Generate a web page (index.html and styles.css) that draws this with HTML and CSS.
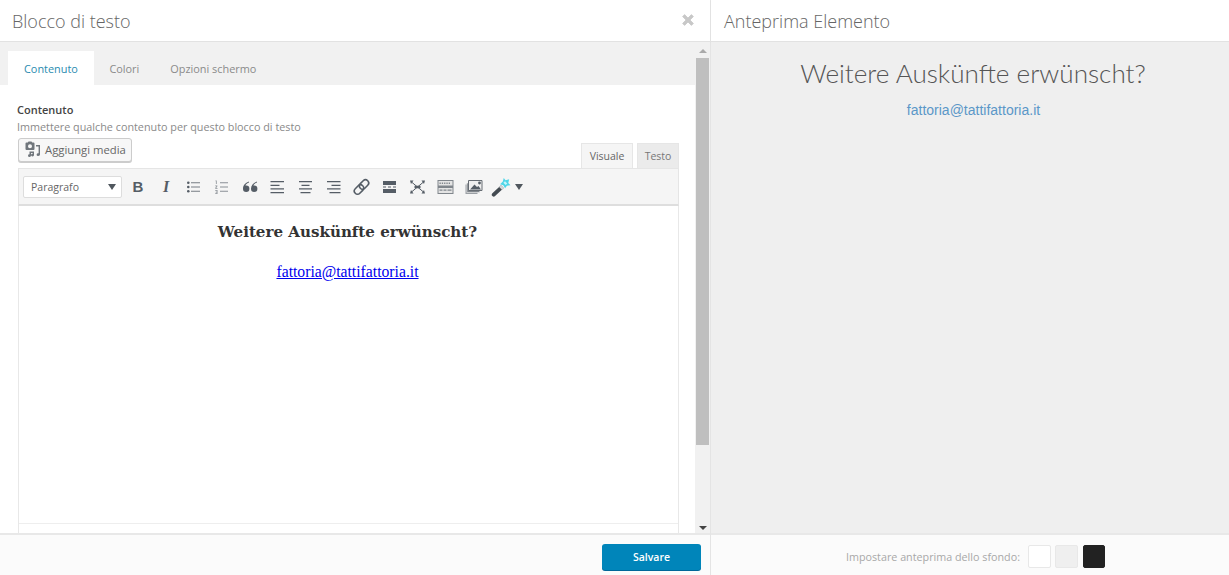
FILE: index.html
```html
<!DOCTYPE html>
<html lang="it">
<head>
<meta charset="utf-8">
<title>Blocco di testo</title>
<link rel="stylesheet" href="styles.css">
</head>
<body>
<div class="app">
  <section class="pane-left">
    <header class="head head-left">
      <h1 class="title">Blocco di testo</h1>
      <svg class="close" viewBox="0 0 12 12" width="12" height="12"><path d="M2.6 0.6 6 4 9.400 0.6 11.400 2.600 8 6 11.400 9.400 9.400 11.400 6 8 2.600 11.400 0.6 9.400 4 6 0.6 2.600Z" stroke="#c8c8c8" stroke-width=".8" stroke-linejoin="round"/></svg>
    </header>
    <div class="body-left">
      <div class="scroller">
        <nav class="tabs">
          <a class="tab active">Contenuto</a>
          <a class="tab">Colori</a>
          <a class="tab">Opzioni schermo</a>
        </nav>
        <div class="form">
          <div class="label">Contenuto</div>
          <div class="desc">Immettere qualche contenuto per questo blocco di testo</div>
          <div class="editor-top">
            <button class="media-btn">
              <svg viewBox="0 0 16 16" width="16" height="16"><path fill="#70767c" d="M1.500 1.500h1.300L3.500.5h3l.7 1h1.300a1 1 0 0 1 1 1V8a1 1 0 0 1-1 1h-7a1 1 0 0 1-1-1V2.500a1 1 0 0 1 1-1ZM5 3.200a2 2 0 1 0 0 4 2 2 0 0 0 0-4Z"/><path fill="#70767c" d="M11 4h4v9.500a1.700 1.400 0 1 1-1.400-1.300V5.500H11ZM4.500 10.500h4.500v3.500a1.500 1.300 0 1 1-1.300-1.200V12H6v2.500a1.500 1.300 0 1 1-1.500-1.200Z"/></svg>
              Aggiungi media
            </button>
            <div class="mode-tabs">
              <span class="mode active">Visuale</span>
              <span class="mode">Testo</span>
            </div>
          </div>
          <div class="toolbar">
            <div class="select">Paragrafo<i class="caret"></i></div>
            <div class="tools">
              <span class="tool glyph-b">B</span>
              <span class="tool glyph-i">I</span>
              <svg class="tool" viewBox="0 0 20 20"><path d="M7 5.200h9v1H7zM7 9.500h9v1H7zM7 13.800h9v1H7z" fill="#777d84"/><circle cx="4.300" cy="5.700" r="1.300"/><circle cx="4.300" cy="10" r="1.300"/><circle cx="4.300" cy="14.300" r="1.300"/></svg>
              <svg class="tool" viewBox="0 0 20 20"><path d="M8 5.200h8v1H8zM8 9.500h8v1H8zM8 13.800h8v1H8z" fill="#8a9096"/><path d="M3.500 3.500h1.200v3.600h-.8V4.300h-.4ZM3.200 8.500h2.200v.8L4.200 11h1.300v.7H3.200V11l1.300-1.700H3.200ZM3.200 13h2.300v4H3.200v-.7h1.500v-.9h-1v-.6h1v-1H3.200Z" fill="#8a9096"/></svg>
              <svg class="tool" viewBox="0 0 20 20"><path d="M9 4.500C6 5.500 3 7.800 3 11.700a3.200 3.200 0 1 0 3.200-3.200c-.3 0-.6 0-.8.100.5-1.400 1.900-2.400 3.600-3ZM17 4.500c-3 1-6 3.300-6 7.200a3.200 3.200 0 1 0 3.200-3.200c-.3 0-.6 0-.8.100.5-1.400 1.900-2.400 3.600-3Z"/></svg>
              <svg class="tool" viewBox="0 0 20 20"><path d="M2.500 4H16v1.200H2.500zM2.500 7.700h9V9h-9zM2.500 11.300H16v1.200H2.500zM2.500 15H16v1.200H2.500z"/></svg>
              <svg class="tool" viewBox="0 0 20 20"><path d="M3 4h13v1.200H3zM5.500 7.700h8V9h-8zM3 11.300h13v1.200H3zM4.500 15h10v1.200h-10z"/></svg>
              <svg class="tool" viewBox="0 0 20 20"><path d="M3 4h13.500v1.200H3zM7.500 7.700h9V9h-9zM3 11.300h13.500v1.200H3zM5.500 15h11v1.200h-11z"/></svg>
              <svg class="tool" viewBox="0 0 20 20"><g fill="none" stroke="#555d66" stroke-width="1.600" transform="rotate(-45 9.500 10)"><rect x="0.700" y="6.800" width="10.500" height="6.400" rx="3.200"/><rect x="7.800" y="6.800" width="10.500" height="6.400" rx="3.200"/></g></svg>
              <svg class="tool" viewBox="0 0 20 20"><path d="M3 4h13v4H3zM3 12h13v4H3zM3 9.400h3v1.200H3zM8 9.400h3v1.200H8zM13 9.400h3v1.200h-3z"/></svg>
              <svg class="tool" viewBox="0 0 20 20"><path d="M3.500 5 15.500 15M15.500 5 3.500 15" stroke="#555d66" stroke-width="1"/><path d="M6.500 8.700h6v2.600h-6zM2 3.500h3.500L3 7ZM17 3.500h-3.500L16 7ZM2 16.500h3.500L3 13ZM17 16.500h-3.500L16 13Z"/></svg>
              <svg class="tool" viewBox="0 0 20 20"><path d="M1.500 3h16v14h-16z" fill="#80868c"/><path d="M2.500 4h14v4.500h-14zM2.500 11h14v5h-14z" fill="#e4e4e4"/><path d="M3.500 5.500h1.300V7H3.500zM5.800 5.500h1.300V7H5.800zM8.100 5.500h1.300V7H8.100zM10.400 5.500h1.300V7h-1.300zM12.700 5.500H14V7h-1.300zM3.500 12.500h3v1.300h-3zM7.500 12.500h3v1.300h-3zM11.500 12.500h4v1.300h-4z" fill="#80868c"/></svg>
              <svg class="tool" viewBox="0 0 20 20"><path d="M1.500 7.500h12v9.500h-12z" fill="#9a9fa4"/><path d="M2.800 6h13v9.500h-13z" fill="#80868c" stroke="#f3f3f3" stroke-width=".6"/><path d="M4.500 3.500H18v10H4.500z" fill="#efefef" stroke="#666c73" stroke-width="1"/><path d="M6 12.500l4.500-5 2.500 2.500 1.500-1 2.500 3.500z" fill="#555d66"/><circle cx="15.500" cy="6" r="1.400" fill="#555d66"/></svg>
              <span class="wand">
                <svg viewBox="0 0 22 22" width="20" height="20"><path d="M14 1 16 3.500 20 2.500 19 6.500 21.500 9 17.500 9.500 15.500 12.500 13.500 9 10 8 13 5Z" fill="#4fd6e8"/><path d="M14.500 5.500 17 8" stroke="#c8f5fb" stroke-width="2.500"/><path d="M11 9 14 12 4.500 21a1.800 1.800 0 0 1-3-3Z" fill="#444b52"/><path d="M11 9 14 12 12 14 9 11Z" fill="#d5d7d9"/></svg>
                <i class="caret"></i>
              </span>
            </div>
          </div>
          <div class="content">
            <h2 class="content-h">Weitere Auskünfte erwünscht?</h2>
            <p class="content-p"><a class="content-link">fattoria@tattifattoria.it</a></p>
          </div>
        </div>
      </div>
      <div class="scrollbar">
        <i class="arrow-up"></i>
        <div class="thumb"></div>
        <i class="arrow-down"></i>
      </div>
    </div>
    <footer class="foot foot-left"><button class="save">Salvare</button></footer>
  </section>
  <section class="pane-right">
    <header class="head"><h1 class="title">Anteprima Elemento</h1></header>
    <div class="preview">
      <h2 class="preview-h">Weitere Auskünfte erwünscht?</h2>
      <a class="preview-link">fattoria@tattifattoria.it</a>
    </div>
    <footer class="foot foot-right">
      <span class="bg-label">Impostare anteprima dello sfondo:</span>
      <i class="swatch white"></i>
      <i class="swatch grey"></i>
      <i class="swatch dark"></i>
    </footer>
  </section>
</div>
</body>
</html>
```
FILE: styles.css
```css
* { box-sizing: border-box; }
html, body { margin: 0; height: 100%; overflow: hidden; background: #fff; }
body { font-family: "Open Sans", sans-serif; color: #444; }
h1, h2, p { margin: 0; }
.app { display: grid; grid-template-columns: 711px 518px; height: 575px; }
.pane-left { display: flex; flex-direction: column; border-right: 1px solid #e4e4e4; min-height: 0; }
.pane-right { display: flex; flex-direction: column; min-height: 0; }
.head { height: 42px; flex: none; display: flex; align-items: center; justify-content: space-between; padding: 0 13px; border-bottom: 1px solid #e2e2e2; box-shadow: 0 1px 1px rgba(0,0,0,.03); background: #fff; }
.head-left { padding: 0 16px 0 12px; }
.title { font-family: "Open Sans", sans-serif; font-weight: 300; font-size: 18px; line-height: 24px; color: #666; }
.close { fill: #c8c8c8; margin-top: -1px; }
.body-left { flex: 1; display: flex; min-height: 0; }
.scroller { width: 695px; flex: none; overflow: hidden; display: flex; flex-direction: column; }
.tabs { height: 43px; flex: none; display: flex; align-items: flex-end; padding-left: 8px; background: #f1f1f1; }
.tab { height: 34px; padding: 0 15.500px; font-size: 10.900px; line-height: 35px; color: #8a8a8a; }
.tab.active { background: #fff; color: #2a8cb0; padding: 0 16px; }
.form { flex: 1; padding: 16px 16px 0 17px; display: flex; flex-direction: column; min-height: 0; background: #fff; }
.label { font-size: 11px; line-height: 17px; font-weight: 600; color: #444; }
.desc { font-size: 10.800px; line-height: 18px; color: #8a8a8a; }
.editor-top { display: flex; justify-content: space-between; align-items: flex-end; margin-left: 1px; height: 32px; }
.media-btn { align-self: flex-start; margin-top: 2px; width: 114px; height: 24px; display: flex; align-items: center; gap: 4px; padding: 0 0 2px 6px; border: 1px solid #ccc; border-radius: 3px; background: #f7f7f7; box-shadow: 0 1px 0 #ccc; font: 11.300px "Open Sans", sans-serif; color: #666; }
.mode-tabs { display: flex; gap: 4px; }
.mode { width: 42px; height: 25px; text-align: center; line-height: 25px; font-size: 10.500px; color: #777; background: #ebebeb; border: 1px solid #e6e6e6; border-bottom: 0; }
.mode.active { background: #f5f5f5; color: #666; width: 52px; }
.toolbar { flex: none; height: 38px; margin-left: 1px; padding: 0 4px; display: flex; align-items: center; background: #f5f5f5; border: 1px solid #e5e5e5; border-bottom: 2px solid #dedede; }
.select { width: 99px; height: 22px; padding-left: 7px; display: flex; align-items: center; justify-content: space-between; padding-right: 5px; background: #fff; border: 1px solid #ddd; border-radius: 2px; font-size: 10.500px; color: #666; }
.caret { width: 0; height: 0; border-left: 4px solid transparent; border-right: 4px solid transparent; border-top: 6px solid #50575e; }
.tools { display: flex; align-items: center; margin-left: 6px; height: 24px; gap: 8px; }
.tool { width: 20px; height: 20px; fill: #555d66; flex: none; }
.glyph-b, .glyph-i { text-align: center; color: #555d66; line-height: 20px; font-family: "Liberation Sans", sans-serif; font-size: 15px; font-weight: 700; }
.glyph-i { font-style: italic; font-family: "Liberation Serif", serif; font-size: 16px; }
.wand { display: flex; align-items: center; gap: 4px; margin-left: -1px; }
.content { flex: 1; margin-left: 1px; border-left: 1px solid #e8e8e8; border-right: 1px solid #e8e8e8; padding: 15px 12px 0 10px; text-align: center; position: relative; background: #fff; }
.content::after { content: ""; position: absolute; left: 0; right: 0; bottom: 9px; border-bottom: 1px solid #eee; }
.content-h { font-family: "DejaVu Serif", serif; font-size: 15.100px; font-weight: 700; line-height: 22px; color: #333; }
.content-p { margin-top: 18px; font-family: "Liberation Serif", serif; font-size: 15.700px; line-height: 22px; }
.content-link { color: #00e; text-decoration: underline; }
.scrollbar { width: 15px; flex: none; background: #f1f1f1; display: flex; flex-direction: column; align-items: center; justify-content: space-between; padding-top: 7px; padding-bottom: 3px; position: relative; }
.thumb { position: absolute; left: 1px; right: 1px; top: 16px; height: 387px; background: #bfbfbf; }
.arrow-up { width: 0; height: 0; border-left: 4px solid transparent; border-right: 4px solid transparent; border-bottom: 4px solid #aaa; }
.arrow-down { width: 0; height: 0; border-left: 4px solid transparent; border-right: 4px solid transparent; border-top: 4px solid #444; }
.foot { height: 42px; flex: none; display: flex; align-items: center; background: #fbfbfb; border-top: 2px solid #e8e8e8; }
.foot-left { justify-content: flex-end; padding: 4px 9px 0 0; }
.save { width: 99px; height: 26px; border: 0; border-radius: 3px; background: #0085ba; box-shadow: 0 1px 0 #006799; color: #fff; font: 600 10.500px "Open Sans", sans-serif; }
.foot-right { padding: 3px 124px 0 135px; }
.bg-label { font-size: 10.760px; color: #a8a8a8; margin-right: 8px; white-space: nowrap; }
.swatch { width: 23px; height: 23px; flex: none; margin-right: 4px; border: 1px solid #e8e8e8; border-radius: 2px; background: #fff; }
.swatch.grey { background: #efefef; }
.swatch.dark { background: #222; border-color: #222; width: 22px; margin-left: 1px; margin-right: 0; }
.preview { flex: 1; background: #efefef; text-align: center; padding-top: 13px; display: flex; flex-direction: column; align-items: center; }
.preview-h { font-family: Lato, sans-serif; font-weight: 300; font-size: 26.100px; line-height: 36px; color: #555; margin-left: 6px; }
.preview-link { margin-top: 9px; font-family: "Liberation Sans", sans-serif; font-size: 14px; line-height: 20px; color: #5b97c8; margin-left: 7px; }
```
